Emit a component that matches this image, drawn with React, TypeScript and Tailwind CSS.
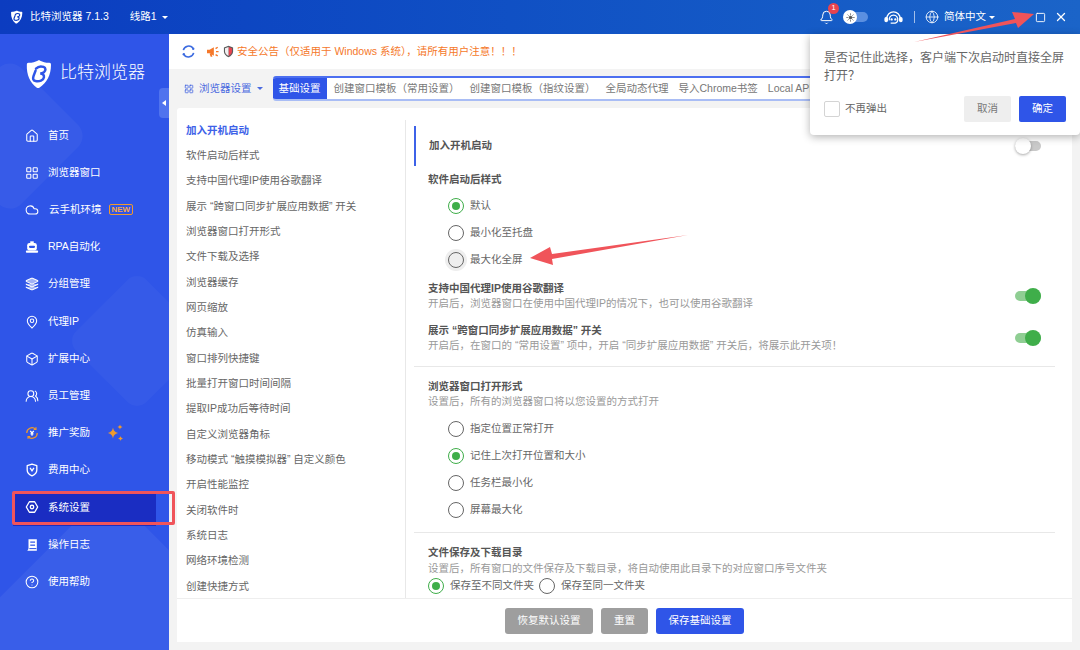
import type { ReactNode } from "react"
import { Bell, Box, CircleHelp, Cloud, Globe, Home, LayoutGrid, Layers, MapPin, Square, Sun, UsersRound, X } from "lucide-react"

type IconProps = { size?: number; strokeWidth?: number; className?: string }

function BotIcon({ size = 14 }: IconProps) {
  return (
    <svg viewBox="0 0 16 16" width={size} height={size}>
      <path d="M6 1.500h4v2.500h-4z" fill="#fff" />
      <rect x="2.500" y="3.500" width="11" height="8.500" rx="2.500" fill="#fff" />
      <rect x="1" y="12" width="14" height="2.500" rx="1" fill="#fff" />
      <rect x="4.500" y="6.500" width="7" height="2.500" rx="1.200" fill="#2f55e8" />
    </svg>
  )
}

function LayersIcon({ size = 14 }: IconProps) {
  return <Layers size={size} strokeWidth={1.8} fill="#ffffff" fillOpacity={0.55} />
}

function RewardIcon({ size = 14 }: IconProps) {
  return (
    <svg viewBox="0 0 16 16" width={size} height={size} fill="none" stroke="#f09a2c" strokeWidth="1.400">
      <path d="M2 8a6 6 0 0 1 10-4.500M14 8a6 6 0 0 1-10 4.500" />
      <path d="M12.500 1.500v2.500h-2.500M3.500 14.500v-2.500h2.500" />
      <path d="M6 5.500l2 2.500 2-2.500M8 8v3M6.300 9h3.400" stroke="#ffffff" />
    </svg>
  )
}

function FeeIcon({ size = 14 }: IconProps) {
  return (
    <svg viewBox="0 0 16 16" width={size} height={size} fill="none" stroke="#fff" strokeWidth="1.500">
      <path d="M8 1.200l5.500 1.800v5c0 3.200-2.300 5.400-5.500 6.800-3.200-1.400-5.500-3.600-5.500-6.800v-5z" strokeLinejoin="round" />
      <path d="M5.800 5.500l2.200 3.500 2.200-3.500" />
    </svg>
  )
}

function SettingIcon({ size = 14 }: IconProps) {
  return (
    <svg viewBox="0 0 16 16" width={size} height={size} fill="none" stroke="#fff" strokeWidth="1.500">
      <path d="M5 2h6l3.500 6-3.500 6h-6l-3.500-6z" strokeLinejoin="round" />
      <circle cx="8" cy="8" r="2" />
    </svg>
  )
}

function LogIcon({ size = 14 }: IconProps) {
  return (
    <svg viewBox="0 0 16 16" width={size} height={size}>
      <path d="M4 1.500h9.500v13h-11c.8-.6 1.500-1.500 1.500-3z" fill="#fff" />
      <rect x="6" y="4" width="5.500" height="1.400" fill="#2f55e8" />
      <rect x="6" y="7.500" width="5.500" height="1.400" fill="#2f55e8" />
      <rect x="5" y="11.500" width="8" height="1.200" fill="#2f55e8" />
    </svg>
  )
}

function PromoStars() {
  return (
    <svg viewBox="0 0 18 18" width="18" height="18" fill="#f09a2c" className="ml-[16px]">
      <path d="M7 3.500c.6 3 1.600 4.500 5 5.500-3.400 1-4.400 2.500-5 5.500-.6-3-1.600-4.500-5-5.500 3.400-1 4.400-2.500 5-5.500z" />
      <path d="M14 .500c.2 1.300.8 2 2.500 2.500-1.700.5-2.300 1.200-2.500 2.500-.2-1.300-.8-2-2.500-2.500 1.700-.5 2.300-1.200 2.500-2.500z" />
      <path d="M14.500 12c.2 1.300.8 2 2.500 2.500-1.700.5-2.300 1.200-2.500 2.500-.2-1.300-.8-2-2.500-2.500 1.700-.5 2.300-1.200 2.500-2.500z" />
    </svg>
  )
}

function SupportIcon() {
  return (
    <svg viewBox="0 0 20 18" width="19" height="17" fill="none" stroke="#fff" strokeWidth="1.300" className="ml-[16px]">
      <path d="M3 10a7 7 0 0 1 14 0" />
      <path d="M5.500 12c-.4-3 1.500-5.500 4.500-5.500s4.900 2.500 4.500 5.500c-.3 2-2 3-4.500 3h-3" />
      <rect x="1" y="9" width="2.500" height="4.500" rx="1.200" fill="#fff" />
      <rect x="16.500" y="9" width="2.500" height="4.500" rx="1.200" fill="#fff" />
      <circle cx="8" cy="11" r=".6" fill="#fff" />
      <circle cx="12" cy="11" r=".6" fill="#fff" />
    </svg>
  )
}

function SyncIcon() {
  return (
    <svg viewBox="0 0 16 16" width="15" height="15" fill="none" stroke="#3c6be0" strokeWidth="1.700">
      <path d="M2.500 6.500a6 6 0 0 1 10.200-2.400" />
      <path d="M13.500 9.500a6 6 0 0 1-10.200 2.400" />
      <circle cx="13" cy="5" r="1.300" fill="#3c6be0" stroke="none" />
      <circle cx="3" cy="11" r="1.300" fill="#3c6be0" stroke="none" />
    </svg>
  )
}

function NoticeIcon() {
  return (
    <svg viewBox="0 0 16 14" width="14" height="12" className="ml-[10px]">
      <path d="M1 4.500h3l5-3v10l-5-3h-3z" fill="#f5782a" />
      <path d="M4 9h2.500l.8 3.500h-2z" fill="#f5782a" />
      <path d="M11 3l2.500-1.500M11.500 6.500h3M11 10l2.500 1.500" stroke="#f5782a" strokeWidth="1.600" />
    </svg>
  )
}

function SafetyIcon() {
  return (
    <svg viewBox="0 0 12 14" width="11" height="13" className="ml-[3px]">
      <path d="M6 .800l5 1.700v4.500c0 2.900-2 4.800-5 6.200-3-1.400-5-3.300-5-6.200v-4.500z" fill="#5a5a5a" />
      <path d="M6 2.200l3.800 1.300v3.500c0 2.100-1.400 3.600-3.800 4.800z" fill="#e8434f" />
      <path d="M6 2.200l-3.800 1.300v3.500c0 2.100 1.400 3.600 3.800 4.800z" fill="#f0f0f0" />
    </svg>
  )
}

const sideItems = [
  { label: "首页", icon: Home },
  { label: "浏览器窗口", icon: LayoutGrid },
  { label: "云手机环境", icon: Cloud, badge: true },
  { label: "RPA自动化", icon: BotIcon },
  { label: "分组管理", icon: LayersIcon },
  { label: "代理IP", icon: MapPin },
  { label: "扩展中心", icon: Box },
  { label: "员工管理", icon: UsersRound },
  { label: "推广奖励", icon: RewardIcon, promo: true },
  { label: "费用中心", icon: FeeIcon },
  { label: "系统设置", icon: SettingIcon, active: true },
  { label: "操作日志", icon: LogIcon },
  { label: "使用帮助", icon: CircleHelp },
]

const settingsMenu = [
  "加入开机启动",
  "软件启动后样式",
  "支持中国代理IP使用谷歌翻译",
  "展示 “跨窗口同步扩展应用数据” 开关",
  "浏览器窗口打开形式",
  "文件下载及选择",
  "浏览器缓存",
  "网页缩放",
  "仿真输入",
  "窗口排列快捷键",
  "批量打开窗口时间间隔",
  "提取IP成功后等待时间",
  "自定义浏览器角标",
  "移动模式 “触摸模拟器” 自定义颜色",
  "开启性能监控",
  "关闭软件时",
  "系统日志",
  "网络环境检测",
  "创建快捷方式",
]

const tabs = ["创建窗口模板（常用设置）", "创建窗口模板（指纹设置）", "全局动态代理", "导入Chrome书签", "Local API"]

function Logo({ className, bg = "#2f55e8" }: { className: string; bg?: string }) {
  return (
    <svg viewBox="0 0 32 36" className={className}>
      <path
        d="M4 4.500 C9 4.500 12 3.500 15 2 C16 1.500 17 1.500 18 2 C21 3.500 24 4.500 29 4.500 C30.500 4.500 31 5.500 31 7 C31 19 26 29 17 34.500 C16 35 15 35 14 34.500 C6 29 1.500 19 2 7 C2 5.500 2.500 4.500 4 4.500 Z"
        fill="#fff"
      />
      <path
        d="M13 11.500 C15 9.500 19 8.500 22 9.500 C25 10.500 25 14 22.500 16 C21 17 19.500 17.500 18 17.500 C21 17.500 23 19 22.500 22 C22 25.500 17 27.500 12.500 26.500 C9.500 25.800 9 23.500 10 20.500 L12.500 14"
        fill="none"
        stroke={bg}
        strokeWidth="3"
        strokeLinecap="round"
      />
    </svg>
  )
}

function Radio({ checked, hover, children }: { checked?: boolean; hover?: boolean; children: ReactNode }) {
  return (
    <div className="flex items-center gap-[6px]">
      <span
        className={`flex h-4 w-4 items-center justify-center rounded-full border-[1.5px] ${
          checked ? "border-[#3fae4a]" : "border-[#666666]"
        } ${hover ? "bg-[#eeeeee] shadow-[0_0_0_3px_#eeeeee]" : "bg-white"}`}
      >
        {checked && <span className="h-2 w-2 rounded-full bg-[#3fae4a]" />}
      </span>
      <span className="text-[10.5px] text-[#666666]">{children}</span>
    </div>
  )
}

function Toggle({ on }: { on?: boolean }) {
  return (
    <span className={`relative block h-[10px] w-[26px] rounded-full ${on ? "bg-[#8fce93]" : "bg-[#c9c9c9]"}`}>
      <span
        className={`absolute top-[-3px] h-4 w-4 rounded-full ${
          on ? "right-0 bg-[#3fae4a]" : "left-0 bg-white shadow-[0_1px_3px_rgba(0,0,0,0.35)]"
        }`}
      />
    </span>
  )
}

function OptionRow({ title, desc, top }: { title: string; desc: string; top: string }) {
  return (
    <div className={`flex items-center justify-between pr-[31px] pl-[14px] ${top}`}>
      <div>
        <div className="text-[10.5px] leading-[15px] font-bold text-[#555555]">{title}</div>
        <div className="text-[10.5px] leading-[15px] text-[#999999]">{desc}</div>
      </div>
      <Toggle on />
    </div>
  )
}

export default function App() {
  return (
    <div className="relative flex h-[650px] w-[1080px] flex-col overflow-hidden bg-[#f3f3f3] font-['Liberation_Sans','Noto_Sans_CJK_SC',sans-serif]">
      {/* Title bar */}
      <header className="flex h-[34px] shrink-0 items-center bg-gradient-to-r from-[#0c3cc0] to-[#1b64c8] pl-[10px] text-white">
        <Logo className="h-[14px] w-[13px]" bg="#0c3cc0" />
        <span className="ml-[7px] text-[10.5px]">比特浏览器 7.1.3</span>
        <span className="ml-[21px] text-[10.5px]">线路1</span>
        <span className="ml-[5px] h-0 w-0 border-x-[3px] border-t-[3px] border-x-transparent border-t-white" />
        <div className="ml-auto flex items-center">
          <span className="relative">
            <Bell size={15} strokeWidth={1.6} />
            <span className="absolute top-[-7px] right-[-5px] flex h-[11px] w-[11px] items-center justify-center rounded-full bg-[#e8434f] text-[7.5px]">
              1
            </span>
          </span>
          <span className="relative ml-[10px] block h-[10px] w-[24px] rounded-full bg-[#5b8fe0]">
            <span className="absolute top-[-2px] left-[-1px] flex h-[14px] w-[14px] items-center justify-center rounded-full bg-white text-[#555555]">
              <Sun size={9} fill="#555555" />
            </span>
          </span>
          <SupportIcon />
          <span className="ml-[11px] h-[12px] w-px bg-white/60" />
          <Globe size={14} strokeWidth={1.4} className="ml-[10px]" />
          <span className="ml-[5px] text-[10.5px]">简体中文</span>
          <span className="ml-[3px] h-0 w-0 border-x-[3px] border-t-[3px] border-x-transparent border-t-white" />
          <Square size={11} strokeWidth={2} className="ml-[40px]" />
          <X size={14} strokeWidth={2.2} className="mr-[12px] ml-[8px]" />
        </div>
      </header>

      <div className="flex min-h-0 flex-1">
        {/* Sidebar */}
        <aside className="relative flex w-[169px] shrink-0 flex-col overflow-hidden bg-[#2f55e8] text-white">
          <div className="absolute top-[46px] left-[-46px] h-[112px] w-[112px] rotate-45 rounded-[16px] bg-white/[0.04]" />
          <div className="absolute top-[257px] left-[87px] h-[100px] w-[100px] rotate-45 rounded-[14px] bg-white/[0.03]" />
          <div className="absolute top-[500px] left-[-14px] h-[250px] w-[230px] rotate-45 bg-white/[0.05]" />
          <div className="relative flex h-[83px] items-start pt-[25px] pl-[25px]">
            <Logo className="h-[30px] w-[27px]" />
            <span className="mt-[3px] ml-[8px] text-[17px] leading-[22px] font-light">比特浏览器</span>
          </div>
          <nav className="relative flex flex-col">
            {sideItems.map((item) => {
              const Icon = item.icon
              return (
                <div
                  key={item.label}
                  className={`mx-[13px] flex h-[37.2px] items-center pl-[12px] ${item.active ? "w-[143px] bg-gradient-to-b from-[#2f55e8] from-[12%] via-[#1a2dc2] via-[12%] to-[#1a2dc2]" : ""}`}
                >
                  <Icon size={14} strokeWidth={1.8} />
                  <span className={`text-[10.5px] ${item.badge ? "ml-[10px]" : "ml-[9px]"}`}>{item.label}</span>
                  {item.badge && (
                    <span className="ml-[7px] rounded-[2px] border-[1.5px] border-[#f09a2c] px-[2px] text-[8px] leading-[9px] font-bold text-[#f5a84a]">
                      NEW
                    </span>
                  )}
                  {item.promo && <PromoStars />}
                </div>
              )
            })}
          </nav>
          <div className="absolute top-[54px] right-0 flex h-[30px] w-[10px] items-center justify-center rounded-l-[4px] bg-[#5073ee]">
            <span className="h-0 w-0 border-y-[3.500px] border-r-[4px] border-y-transparent border-r-white" />
          </div>
        </aside>

        {/* Main */}
        <main className="flex min-w-0 flex-1 flex-col">
          <div className="flex h-[35px] shrink-0 items-center bg-white pl-[12px]">
            <SyncIcon />
            <NoticeIcon />
            <SafetyIcon />
            <span className="ml-[3px] text-[10.5px] text-[#f5782a]">
              安全公告（仅适用于 Windows 系统），请所有用户注意！！！
            </span>
          </div>

          <div className="flex h-[39px] shrink-0 items-center pl-[15px]">
            <LayoutGrid size={10} strokeWidth={1.8} className="text-[#3c5fe0]" />
            <span className="ml-[5px] text-[10.5px] text-[#4a6ae0]">浏览器设置</span>
            <span className="ml-[5px] h-0 w-0 border-x-[3px] border-t-[3px] border-x-transparent border-t-[#4a6ae0]" />
            <div className="ml-[10px] flex h-[25px] min-w-0 flex-1 items-center overflow-hidden rounded-l-[3px] border-y-2 border-t-[#4c6ff0] border-b-[#a9bdf5] bg-white">
              <span className="mt-[-2px] mb-[-2px] flex h-[25px] w-[54px] shrink-0 items-center justify-center bg-[#2f55e8] text-[10.5px] text-white">
                基础设置
              </span>
              <div className="flex shrink-0 items-center gap-[10px] pl-[7px] text-[10.5px] whitespace-nowrap text-[#777777]">
                {tabs.map((t) => (
                  <span key={t}>{t}</span>
                ))}
              </div>
            </div>
          </div>

          <div className="mx-[8px] mb-[8px] flex min-h-0 flex-1 flex-col rounded-t-[3px] bg-white">
            <div className="flex min-h-0 flex-1">
              {/* Left menu */}
              <div className="w-[228px] shrink-0 overflow-hidden pt-[10px] pl-[9px]">
                {settingsMenu.map((m, i) => (
                  <div
                    key={m}
                    className={`flex h-[25.33px] items-center text-[10.5px] whitespace-nowrap ${
                      i === 0 ? "font-bold text-[#3d62e8]" : "text-[#666666]"
                    }`}
                  >
                    {m}
                  </div>
                ))}
              </div>

              {/* Right panel */}
              <div className="mt-[12px] min-w-0 flex-1 overflow-hidden border-l border-[#e8e8e8]">
                <div className="mt-[6px] ml-[8px] flex h-[40px] items-center justify-between border-l-2 border-[#3d62e8] pr-[31px] pl-[13px]">
                  <span className="text-[10.5px] font-bold text-[#555555]">加入开机启动</span>
                  <Toggle />
                </div>
                <div className="mt-[6px] pl-[22px] text-[10.5px] leading-[15px] font-bold text-[#555555]">软件启动后样式</div>
                <div className="mt-[11px] flex flex-col gap-[11px] pl-[42px]">
                  <Radio checked>默认</Radio>
                  <Radio>最小化至托盘</Radio>
                  <Radio hover>最大化全屏</Radio>
                </div>
                <div className="ml-[8px]">
                  <OptionRow
                    top="mt-[13px]"
                    title="支持中国代理IP使用谷歌翻译"
                    desc="开启后，浏览器窗口在使用中国代理IP的情况下，也可以使用谷歌翻译"
                  />
                  <OptionRow
                    top="mt-[12px]"
                    title="展示 “跨窗口同步扩展应用数据” 开关"
                    desc="开启后，在窗口的 “常用设置” 项中，开启 “同步扩展应用数据” 开关后，将展示此开关项！"
                  />
                </div>
                <div className="mt-[13px] mr-[17px] ml-[8px] h-px bg-[#e8e8e8]" />
                <div className="mt-[12px] pl-[22px] text-[10.5px] leading-[15px] font-bold text-[#555555]">浏览器窗口打开形式</div>
                <div className="pl-[22px] text-[10.5px] leading-[15px] text-[#999999]">设置后，所有的浏览器窗口将以您设置的方式打开</div>
                <div className="mt-[12px] flex flex-col gap-[11px] pl-[42px]">
                  <Radio>指定位置正常打开</Radio>
                  <Radio checked>记住上次打开位置和大小</Radio>
                  <Radio>任务栏最小化</Radio>
                  <Radio>屏幕最大化</Radio>
                </div>
                <div className="mt-[14px] mr-[17px] ml-[8px] h-px bg-[#e8e8e8]" />
                <div className="mt-[12px] pl-[22px] text-[10.5px] leading-[15px] font-bold text-[#555555]">文件保存及下载目录</div>
                <div className="pt-px pl-[22px] text-[10.5px] leading-[15px] text-[#999999]">
                  设置后，所有窗口的文件保存及下载目录，将自动使用此目录下的对应窗口序号文件夹
                </div>
                <div className="mt-[2px] flex gap-[5px] pl-[22px]">
                  <Radio checked>保存至不同文件夹</Radio>
                  <Radio>保存至同一文件夹</Radio>
                </div>
              </div>
            </div>

            <div className="flex h-[44px] shrink-0 items-center justify-center gap-[8px] border-t border-[#eeeeee]">
              <button className="h-[26px] w-[88px] rounded-[3px] bg-[#9e9e9e] text-[10.5px] text-white">恢复默认设置</button>
              <button className="h-[26px] w-[47px] rounded-[3px] bg-[#9e9e9e] text-[10.5px] text-white">重置</button>
              <button className="h-[26px] w-[88px] rounded-[3px] bg-[#2f55e8] text-[10.5px] text-white">保存基础设置</button>
            </div>
          </div>
        </main>
      </div>

      {/* Confirm popup */}
      <div className="absolute top-[34px] right-0 h-[101px] w-[270px] rounded-b-[4px] bg-white px-[14px] pt-[15px] shadow-[0_2px_8px_rgba(0,0,0,0.3)]">
        <p className="text-[12px] leading-[18px] text-[#666666]">是否记住此选择，客户端下次启动时直接全屏打开？</p>
        <div className="mt-[11px] flex items-center">
          <span className="h-4 w-4 rounded-[2px] border border-[#d4d4d4]" />
          <span className="ml-[5px] text-[10.5px] text-[#666666]">不再弹出</span>
          <button className="ml-auto h-[26px] w-[47px] rounded-[2px] bg-[#eeeeee] text-[10.5px] text-[#777777]">取消</button>
          <button className="ml-[8px] h-[26px] w-[47px] rounded-[2px] bg-[#2f55e8] text-[10.5px] text-white">确定</button>
        </div>
      </div>

      {/* Annotation overlays */}
      <div className="absolute top-[491px] left-[12px] h-[34px] w-[163px] rounded-[2px] border-[3px] border-[#f0545a]" />
      <svg className="pointer-events-none absolute top-0 left-0" width="1080" height="650" viewBox="0 0 1080 650">
        <path d="M914 42 L1015 19 L1012 12 L1034 14 L1018 28 L1016 23 Z" fill="#f0545a" />
        <path d="M688 235 L552 254 L550 247 L530 258 L553 265 L552 259 Z" fill="#f0545a" />
      </svg>
    </div>
  )
}
